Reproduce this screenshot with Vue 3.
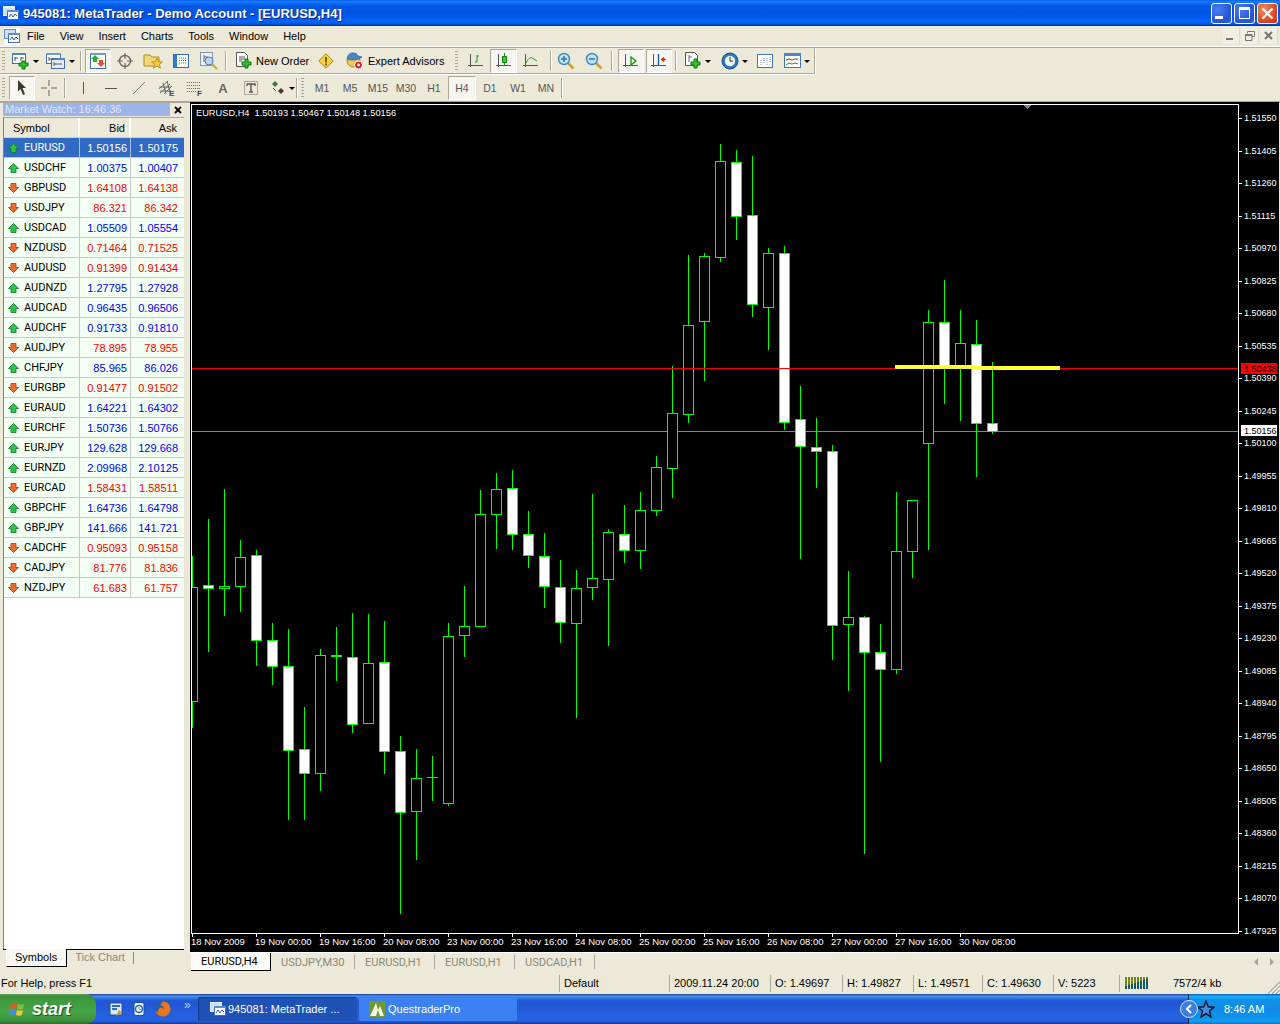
<script setup>
// [high, body top, body bottom, low, filled]
const raw = [
  [556, 587, 702, 728, 0], [519, 585, 589, 652, 1], [489, 586, 589, 616, 0], [540, 557, 587, 612, 0],
  [550, 555, 641, 666, 1], [623, 640, 667, 685, 1], [629, 666, 751, 820, 1], [707, 749, 774, 820, 1],
  [649, 655, 774, 791, 0], [627, 655, 657, 681, 1], [613, 657, 725, 733, 1], [614, 663, 724, 724, 0],
  [621, 662, 752, 774, 1], [736, 751, 813, 914, 1], [749, 778, 812, 860, 0], [756, 777, 778, 801, 0],
  [623, 636, 804, 806, 0], [586, 626, 636, 657, 0], [490, 514, 627, 627, 0], [473, 489, 515, 549, 0],
  [470, 488, 535, 550, 1], [511, 534, 556, 568, 1], [533, 556, 587, 608, 1], [560, 587, 623, 643, 1],
  [570, 588, 624, 718, 0], [494, 578, 588, 600, 0], [529, 532, 580, 646, 0], [505, 534, 551, 563, 1],
  [492, 510, 551, 569, 0], [456, 467, 511, 516, 0], [366, 413, 469, 498, 0], [255, 325, 415, 423, 0],
  [253, 256, 322, 381, 0], [144, 161, 258, 262, 0], [150, 162, 217, 240, 1], [156, 215, 305, 317, 1],
  [248, 253, 308, 350, 0], [246, 253, 423, 430, 1], [386, 419, 447, 559, 1], [418, 447, 452, 488, 1],
  [445, 451, 626, 660, 1], [571, 617, 625, 691, 0], [616, 617, 653, 854, 1], [624, 652, 670, 762, 1],
  [492, 551, 670, 674, 0], [500, 500, 552, 578, 0], [310, 322, 444, 550, 0], [280, 322, 368, 404, 1],
  [310, 343, 368, 421, 0], [320, 344, 424, 477, 1], [362, 423, 432, 434, 1],
]
const candles = raw.map((c, i) => ({ x: 192 + i * 16, high: c[0], top: c[1], bottom: c[2], low: c[3], filled: c[4] }))

const prices = ['1.51550', '1.51405', '1.51260', '1.51115', '1.50970', '1.50825', '1.50680', '1.50535', '1.50390', '1.50245',
  '1.50100', '1.49955', '1.49810', '1.49665', '1.49520', '1.49375', '1.49230', '1.49085', '1.48940', '1.48795',
  '1.48650', '1.48505', '1.48360', '1.48215', '1.48070', '1.47925'].map((p, i) => ({ p, y: Math.round(118 + i * 32.5) }))

const times = ['18 Nov 2009', '19 Nov 00:00', '19 Nov 16:00', '20 Nov 08:00', '23 Nov 00:00', '23 Nov 16:00', '24 Nov 08:00',
  '25 Nov 00:00', '25 Nov 16:00', '26 Nov 08:00', '27 Nov 00:00', '27 Nov 16:00', '30 Nov 08:00']

const chartHeader = 'EURUSD,H4\u00a0\u00a01.50193 1.50467 1.50148 1.50156'

const quotes = [
  ['EURUSD', '1.50156', '1.50175', 1], ['USDCHF', '1.00375', '1.00407', 1], ['GBPUSD', '1.64108', '1.64138', 0],
  ['USDJPY', '86.321', '86.342', 0], ['USDCAD', '1.05509', '1.05554', 1], ['NZDUSD', '0.71464', '0.71525', 0],
  ['AUDUSD', '0.91399', '0.91434', 0], ['AUDNZD', '1.27795', '1.27928', 1], ['AUDCAD', '0.96435', '0.96506', 1],
  ['AUDCHF', '0.91733', '0.91810', 1], ['AUDJPY', '78.895', '78.955', 0], ['CHFJPY', '85.965', '86.026', 1],
  ['EURGBP', '0.91477', '0.91502', 0], ['EURAUD', '1.64221', '1.64302', 1], ['EURCHF', '1.50736', '1.50766', 1],
  ['EURJPY', '129.628', '129.668', 1], ['EURNZD', '2.09968', '2.10125', 1], ['EURCAD', '1.58431', '1.58511', 0],
  ['GBPCHF', '1.64736', '1.64798', 1], ['GBPJPY', '141.666', '141.721', 1], ['CADCHF', '0.95093', '0.95158', 0],
  ['CADJPY', '81.776', '81.836', 0], ['NZDJPY', '61.683', '61.757', 0],
]

const menus = ['File', 'View', 'Insert', 'Charts', 'Tools', 'Window', 'Help']
const periods = ['M1', 'M5', 'M15', 'M30', 'H1', 'H4', 'D1', 'W1', 'MN']
const chartTabs = ['USDJPY,M30', 'EURUSD,H1', 'EURUSD,H1', 'USDCAD,H1']
const status = [
  { t: '2009.11.24 20:00', w: 101 }, { t: 'O: 1.49697', w: 72 }, { t: 'H: 1.49827', w: 71 },
  { t: 'L: 1.49571', w: 69 }, { t: 'C: 1.49630', w: 71 }, { t: 'V: 5223', w: 66 },
]
// signal meter: teal part grows from left to right, olive sits on top
const meter = [3, 4, 5, 6, 7, 8, 9, 10].map(h => `linear-gradient(0deg, #14566e ${h}px, #6f8a12 ${h}px)`)
</script>

<template>
  <div class="app">
    <div class="titlebar">
      <svg class="appicon" width="16" height="16" viewBox="0 0 16 16">
        <rect x="0.5" y="1.5" width="11" height="9" fill="#cfe0f5" stroke="#dfefff" />
        <rect x="0" y="1" width="12" height="2" fill="#e8f2ff" />
        <rect x="4.5" y="5.5" width="11" height="9" fill="#fff" stroke="#3d6fb0" />
        <rect x="4" y="5" width="12" height="2" fill="#5b8fd0" />
        <path d="M6 12l2-3 2 3 2-3 2 2" fill="none" stroke="#2f5f9f" />
      </svg>
      <span class="title-text">945081: MetaTrader - Demo Account - [EURUSD,H4]</span>
      <div class="winbtns">
        <div class="winbtn"><i class="min-glyph"></i></div>
        <div class="winbtn"><i class="max-glyph"></i></div>
        <div class="winbtn close">
          <svg width="13" height="13" viewBox="0 0 13 13"><path d="M1.5 1.5l10 10M11.5 1.5l-10 10" stroke="#fff" stroke-width="2.2" /></svg>
        </div>
      </div>
    </div>

    <div class="menubar">
      <div class="menu-icon">
        <svg width="16" height="16" viewBox="0 0 16 16">
          <rect x="0.5" y="1.5" width="11" height="9" fill="#cfe0f5" stroke="#5b8fd0" />
          <rect x="4.5" y="5.5" width="11" height="9" fill="#fff" stroke="#3d6fb0" />
          <rect x="4" y="5" width="12" height="2" fill="#5b8fd0" />
          <path d="M6 12l2-3 2 3 2-3 2 2" fill="none" stroke="#2f5f9f" />
        </svg>
      </div>
      <span v-for="m in menus" :key="m" class="menu-item">{{ m }}</span>
      <div class="mdi">
        <div class="mdi-btn"><svg width="12" height="12" viewBox="0 0 12 12"><rect x="1" y="8" width="7" height="2" fill="#777" /></svg></div>
        <div class="mdi-btn"><svg width="12" height="12" viewBox="0 0 12 12"><path d="M3.5 3.5V1.5h7v5H8M1.5 4.5h6.5v6H1.5z" fill="none" stroke="#777" /><rect x="1" y="4" width="7" height="2" fill="#777" /></svg></div>
        <div class="mdi-btn"><svg width="12" height="12" viewBox="0 0 12 12"><path d="M2 2l7 7M9 2l-7 7" stroke="#777" stroke-width="2.2" /></svg></div>
      </div>
    </div>

    <div class="bar bar-one">
      <div class="band band-a">
        <i class="grip"></i>
        <div class="tool newchart">
          <svg width="18" height="18" viewBox="0 0 18 18">
            <rect x="0.5" y="1.5" width="13" height="10" fill="#fff" stroke="#3d6fb0" />
            <rect x="0" y="1" width="14" height="2" fill="#4f86c8" />
            <path d="M3 9V5M3 6h3M9 9V5M9 6h3" stroke="#555" fill="none" />
            <path d="M8 8h3v-2h3v2h3v3h-3v3h-3v-3H8z" transform="translate(-1 3)" fill="#2ec22e" stroke="#0b7a0b" />
          </svg>
          <i class="dd"></i>
        </div>
        <div class="tool profiles">
          <svg width="20" height="18" viewBox="0 0 20 18">
            <rect x="0.5" y="1.5" width="14" height="10" fill="#fff" stroke="#3d6fb0" />
            <rect x="0" y="1" width="15" height="2" fill="#6d9ad4" />
            <rect x="5.5" y="6.5" width="13" height="10" fill="#e4eefa" stroke="#3d6fb0" />
            <rect x="5" y="6" width="14" height="2" fill="#4f86c8" />
            <path d="M3 9V5M3 7h6M8 14v-4M8 12h8" stroke="#555" fill="none" />
          </svg>
          <i class="dd"></i>
        </div>
        <i class="sep s-a"></i>
        <div class="tool pressed active-btn">
          <svg width="16" height="18" viewBox="0 0 16 18">
            <rect x="0.5" y="1.5" width="15" height="15" fill="#fff" stroke="#3d6fb0" />
            <rect x="0" y="1" width="16" height="2" fill="#6d9ad4" />
            <path d="M5 3l4 4H7v3H3V7H1z" fill="#27b327" />
            <path d="M11 15l-4-4h2V8h4v3h2z" fill="#e5532a" />
          </svg>
        </div>
        <div class="tool">
          <svg width="18" height="18" viewBox="0 0 18 18"><circle cx="9" cy="9" r="5.5" fill="none" stroke="#666" stroke-width="1.4" /><path d="M9 1v6M9 11v6M1 9h6M11 9h6" stroke="#666" stroke-width="1.2" /></svg>
        </div>
        <div class="tool">
          <svg width="20" height="18" viewBox="0 0 20 18">
            <path d="M1 3h6l2 2h7v9H1z" fill="#f3d774" stroke="#a98a2d" />
            <path d="M14 6l1.6 3.6 3.9.3-3 2.5 1 3.8-3.5-2.1-3.5 2.1 1-3.8-3-2.5 3.9-.3z" fill="#f5c93a" stroke="#a0801e" stroke-width=".7" />
          </svg>
        </div>
        <div class="tool">
          <svg width="16" height="16" viewBox="0 0 16 16">
            <rect x="0.5" y="1.5" width="15" height="13" fill="#fff" stroke="#2f6db5" />
            <rect x="1" y="2" width="3" height="12" fill="#2f7fd0" />
            <path d="M6 5h7M6 7.5h7M6 10h7" stroke="#c23b3b" stroke-dasharray="1 1" />
          </svg>
        </div>
        <div class="tool">
          <svg width="18" height="18" viewBox="0 0 18 18">
            <rect x="0.5" y="0.5" width="12" height="13" fill="#eef3f8" stroke="#8295ad" />
            <path d="M4 10V3M4 5h4" stroke="#666" />
            <circle cx="9" cy="9" r="4" fill="#bcd6f2" stroke="#4d7cab" />
            <path d="M12 12l5 5" stroke="#c8a63a" stroke-width="2" />
          </svg>
        </div>
        <i class="sep s-b"></i>
        <div class="tool labelled new-order">
          <svg width="17" height="20" viewBox="0 0 17 20">
            <path d="M.5 1.5h8l3 3v11H.5z" fill="#fff" stroke="#555" />
            <path d="M3 6h6M3 8h6M3 10h3" stroke="#555" />
            <path d="M9 8h3v3h3v3h-3v3H9v-3H6v-3h3z" fill="#2ec22e" stroke="#0b7a0b" />
          </svg>
          <span>New Order</span>
        </div>
        <div class="tool">
          <svg width="16" height="16" viewBox="0 0 16 16">
            <path d="M8 .8L15.2 8 8 15.2.8 8z" fill="#f7d13d" stroke="#a9861e" stroke-linejoin="round" />
            <rect x="7" y="4" width="2" height="5.5" fill="#7a5d10" />
            <rect x="7" y="10.5" width="2" height="2" fill="#7a5d10" />
          </svg>
        </div>
        <div class="tool labelled ea">
          <svg width="17" height="18" viewBox="0 0 17 18">
            <ellipse cx="7.5" cy="9" rx="6.5" ry="6" fill="#f2c94c" stroke="#a9861e" />
            <path d="M1 7c1-5 3-6 6-6s4 1 5 3l4 1c-3 3-10 4-15 2z" fill="#4d86c6" stroke="#2a5c96" stroke-width=".7" />
            <circle cx="12.5" cy="13" r="4" fill="#d42020" stroke="#fff" />
            <circle cx="12.5" cy="13" r="1.4" fill="#fff" />
          </svg>
          <span>Expert Advisors</span>
        </div>
      </div>
      <div class="band band-b">
        <i class="grip"></i>
        <div class="tool bars-btn">
          <svg width="16" height="16" viewBox="0 0 16 16">
            <path d="M2.5 1v13M0 12.5h15" stroke="#555" fill="none" />
            <path d="M9 2v7M9 3h2M9 9H7" stroke="#1c9a1c" fill="none" />
          </svg>
        </div>
        <div class="tool pressed candle-btn">
          <svg width="16" height="16" viewBox="0 0 16 16">
            <path d="M2.5 1v13M0 12.5h15" stroke="#555" fill="none" />
            <path d="M8.5 0v12" stroke="#1c9a1c" />
            <rect x="6.5" y="3.5" width="4" height="6" fill="#2fd12f" stroke="#0d8a0d" />
          </svg>
        </div>
        <div class="tool">
          <svg width="16" height="16" viewBox="0 0 16 16">
            <path d="M2.5 1v13M0 12.5h15" stroke="#555" fill="none" />
            <path d="M3 10c2-4 4-6 6-5s3 2 5 3" stroke="#1c9a1c" fill="none" />
          </svg>
        </div>
        <i class="sep s-c"></i>
        <div class="tool">
          <svg width="18" height="18" viewBox="0 0 18 18">
            <path d="M10.5 10.5l6 6" stroke="#caa43a" stroke-width="2.6" />
            <circle cx="7" cy="7" r="5.5" fill="#bfe0f5" stroke="#3f88bd" stroke-width="1.4" />
            <path d="M7 4v6M4 7h6" stroke="#2b77b0" stroke-width="1.6" />
          </svg>
        </div>
        <div class="tool">
          <svg width="18" height="18" viewBox="0 0 18 18">
            <path d="M10.5 10.5l6 6" stroke="#caa43a" stroke-width="2.6" />
            <circle cx="7" cy="7" r="5.5" fill="#bfe0f5" stroke="#3f88bd" stroke-width="1.4" />
            <path d="M4 7h6" stroke="#2b77b0" stroke-width="1.6" />
          </svg>
        </div>
        <i class="sep s-d"></i>
        <div class="tool pressed shift-a">
          <svg width="16" height="16" viewBox="0 0 16 16">
            <path d="M2.5 1v13M0 12.5h15" stroke="#555" fill="none" />
            <path d="M8 4l5 4-5 4z" fill="none" stroke="#1c9a1c" stroke-width="1.4" />
          </svg>
        </div>
        <div class="tool pressed shift-b">
          <svg width="16" height="16" viewBox="0 0 16 16">
            <path d="M2.5 1v13M0 12.5h15" stroke="#555" fill="none" />
            <path d="M7.5 1v12" stroke="#1f5f9f" stroke-width="1.4" />
            <path d="M15 6.5h-3M13 4.5l-3 2 3 2z" fill="#c8391c" stroke="#c8391c" />
          </svg>
        </div>
        <i class="sep s-e"></i>
        <div class="tool newdoc">
          <svg width="17" height="20" viewBox="0 0 17 20">
            <path d="M.5 1.5h9l3 3v10H.5z" fill="#fff" stroke="#555" />
            <path d="M4 4v7M4 6h3" stroke="#666" />
            <path d="M9 8h3v3h3v3h-3v3H9v-3H6v-3h3z" fill="#2ec22e" stroke="#0b7a0b" />
          </svg>
          <i class="dd"></i>
        </div>
        <div class="tool clock">
          <svg width="18" height="18" viewBox="0 0 18 18">
            <circle cx="9" cy="9" r="8" fill="#2a78c8" stroke="#17508f" />
            <circle cx="9" cy="9" r="5.2" fill="#eef4fa" />
            <path d="M9 5v4h3" stroke="#333" fill="none" />
          </svg>
          <i class="dd"></i>
        </div>
        <div class="tool tile">
          <svg width="16" height="16" viewBox="0 0 16 16">
            <rect x="0.5" y="1.5" width="15" height="13" fill="#fff" stroke="#3d78b8" />
            <path d="M4 12V7M7 10V5M7 7h2M10 12V4M13 9V4" stroke="#7b93ad" stroke-dasharray="1 1" />
          </svg>
        </div>
        <div class="tool wintpl">
          <svg width="17" height="16" viewBox="0 0 17 16">
            <rect x="0.5" y="0.5" width="16" height="14" fill="#fff" stroke="#3d78b8" />
            <rect x="0" y="0" width="17" height="3" fill="#4f86c8" />
            <path d="M2 7l3-1 3 1 3-1 3 0" stroke="#b33a1e" fill="none" />
            <path d="M2 12l3-2 3 1 3-1 3 1" stroke="#1c9a1c" fill="none" />
          </svg>
          <i class="dd"></i>
        </div>
      </div>
    </div>

    <div class="bar bar-two">
      <div class="band band-c">
        <i class="grip"></i>
        <div class="tool pressed cursor-btn">
          <svg width="14" height="18" viewBox="0 0 14 18"><path d="M3 1l8 8H7.5l2.5 6-2 1-2.5-6L3 12.5z" fill="#3a3a3a" /></svg>
        </div>
        <div class="tool cross-btn">
          <svg width="18" height="18" viewBox="0 0 18 18"><path d="M9 1v6M9 11v6M1 9h6M11 9h6" stroke="#666" /></svg>
        </div>
        <i class="sep s-f"></i>
        <div class="tool line-first"><svg width="14" height="14" viewBox="0 0 14 14"><path d="M7.5 1v12" stroke="#555" /></svg></div>
        <div class="tool"><svg width="14" height="14" viewBox="0 0 14 14"><path d="M1 7.5h12" stroke="#555" /></svg></div>
        <div class="tool"><svg width="14" height="14" viewBox="0 0 14 14"><path d="M1 13L13 1" stroke="#777" /></svg></div>
        <div class="tool">
          <svg width="18" height="18" viewBox="0 0 18 18">
            <path d="M1 10l9-8M2 14l10-9M6 15l8-8M5 4l3 11M9 2l3 11M1 8h12M2 12h11" stroke="#555" stroke-width=".8" />
            <text x="11" y="17" class="mini">E</text>
          </svg>
        </div>
        <div class="tool">
          <svg width="18" height="18" viewBox="0 0 18 18">
            <path d="M1 3.5h13M1 6.5h13M1 9.5h13M1 12.5h10" stroke="#666" stroke-dasharray="1 1" />
            <text x="11" y="17" class="mini">F</text>
          </svg>
        </div>
        <div class="tool"><span class="a-glyph">A</span></div>
        <div class="tool">
          <svg width="16" height="16" viewBox="0 0 16 16">
            <rect x="1.5" y="1.5" width="13" height="13" fill="none" stroke="#666" stroke-dasharray="1 1" />
            <path d="M4 4h8v2M4 4v2M8 4v8M6 12h4" stroke="#555" stroke-width="1.4" fill="none" />
          </svg>
        </div>
        <div class="tool arrows-btn">
          <svg width="16" height="16" viewBox="0 0 16 16">
            <path d="M5 1l3 3-3 3-3-3z" fill="#3a7a3a" />
            <path d="M11 8l3 3-3 3-3-3z" fill="#3a3a3a" />
            <path d="M3 8l3 3" stroke="#555" />
          </svg>
          <i class="dd"></i>
        </div>
        <i class="sep s-g"></i>
        <i class="grip grip-p"></i>
        <div class="periods">
          <span v-for="p in periods" :key="p" class="period" :class="{ pressed: p === 'H4' }">{{ p }}</span>
        </div>
        <i class="sep s-h"></i>
      </div>
    </div>

    <div class="main">
      <div class="side">
        <div class="side-head">
          <span class="mw-title">Market Watch: 16:46:36</span>
          <svg class="mw-x" width="8" height="8" viewBox="0 0 8 8"><path d="M1 1l6 6M7 1L1 7" stroke="#000" stroke-width="1.8" /></svg>
        </div>
        <div class="mw-box">
          <div class="mw-row mw-header">
            <span class="c-sym">Symbol</span>
            <span class="c-num">Bid</span>
            <span class="c-num">Ask</span>
          </div>
          <div
            v-for="(q, i) in quotes"
            :key="q[0]"
            class="mw-row"
            :class="{ selected: i === 0, up: q[3], down: !q[3] }"
          >
            <span class="c-sym">
              <svg width="11" height="10" viewBox="0 0 11 10">
                <path v-if="q[3]" d="M5.5 .5l5 5H8v4H3v-4H.5z" fill="#2ec24a" stroke="#0f7a2a" stroke-width=".8" />
                <path v-else d="M5.5 9.5l5-5H8v-4H3v4H.5z" fill="#ee6a2c" stroke="#a53a14" stroke-width=".8" />
              </svg>
              <span class="sym-name">{{ q[0] }}</span>
            </span>
            <span class="c-num">{{ q[1] }}</span>
            <span class="c-num">{{ q[2] }}</span>
          </div>
        </div>
        <div class="side-tabs">
          <span class="side-tab on">Symbols</span>
          <span class="side-tab">Tick Chart</span>
          <i class="tab-sep"></i>
        </div>
      </div>

      <div class="work">
        <svg class="chart" width="1089" height="850" viewBox="190 102 1089 850">
          <defs>
            <clipPath id="plot"><rect x="192" y="105" width="1046" height="828" /></clipPath>
          </defs>
          <rect x="190" y="102" width="1089" height="850" fill="#000" />
          <rect x="192" y="431" width="1046" height="1" fill="#778899" />
          <g clip-path="url(#plot)" shape-rendering="crispEdges">
            <g v-for="c in candles" :key="c.x">
              <rect :x="c.x" :y="c.high" width="1" :height="c.low - c.high" fill="#00ff00" />
              <rect :x="c.x - 5" :y="c.top" width="11" :height="c.bottom - c.top" fill="#00ff00" />
              <rect
                v-if="c.bottom - c.top > 2"
                :x="c.x - 4"
                :y="c.top + 1"
                width="9"
                :height="c.bottom - c.top - 2"
                :fill="c.filled ? '#fff' : '#000'"
              />
            </g>
          </g>
          <g shape-rendering="crispEdges">
            <rect x="192" y="368" width="1046" height="1" fill="#ff0000" />
            <rect x="895" y="365" width="82" height="4" fill="#ffff33" />
            <rect x="977" y="366" width="83" height="4" fill="#ffff33" />
            <path d="M1023 105h9l-4.500 4z" fill="#778899" />
            <rect x="191" y="104" width="1048" height="1" fill="#fff" />
            <rect x="191" y="933" width="1048" height="1" fill="#fff" />
            <rect x="191" y="104" width="1" height="830" fill="#fff" />
            <rect x="1238" y="104" width="1" height="830" fill="#fff" />
            <rect v-for="p in prices" :key="p.p" x="1239" :y="p.y" width="3" height="1" fill="#fff" />
            <rect v-for="(t, i) in times" :key="i" :x="192 + i * 64" y="933" width="1" height="4" fill="#fff" />
          </g>
          <text x="196" y="116" class="t head">{{ chartHeader }}</text>
          <text v-for="p in prices" :key="p.p" x="1244" :y="p.y + 3" class="t">{{ p.p }}</text>
          <text v-for="(t, i) in times" :key="t" :x="191 + i * 64" y="945" class="t wide">{{ t }}</text>
          <rect x="1241" y="363" width="36" height="11" fill="#ff0000" shape-rendering="crispEdges" />
          <text x="1244" y="372" class="t dark">1.50438</text>
          <rect x="1241" y="425" width="36" height="11" fill="#fff" shape-rendering="crispEdges" />
          <text x="1244" y="434" class="t dark">1.50156</text>
        </svg>
        <div class="chart-tabs">
          <span class="chart-tab on">EURUSD,H4</span>
          <span v-for="(t, i) in chartTabs" :key="i" class="chart-tab">{{ t }}</span>
          <div class="tab-arrows">
            <i class="tri-l"></i>
            <i class="tri-r"></i>
          </div>
        </div>
      </div>
    </div>

    <div class="statusbar">
      <span class="st-help">For Help, press F1</span>
      <span class="st-cell st-default">Default</span>
      <span v-for="s in status" :key="s.t" class="st-cell st-item" :style="{ width: s.w + 'px' }">{{ s.t }}</span>
      <span class="st-cell st-meter">
        <span class="meter">
          <i v-for="(bg, n) in meter" :key="n" :style="{ background: bg }"></i>
        </span>
      </span>
      <span class="st-mem">7572/4 kb</span>
      <svg class="st-grip" width="14" height="14" viewBox="0 0 14 14">
        <path d="M14 2L2 14M14 6L6 14M14 10l-4 4" stroke="#aca899" stroke-width="1.4" />
        <path d="M14 3.500L3.500 14M14 7.500L7.500 14M14 11.500L11.500 14" stroke="#fff" />
      </svg>
    </div>

    <div class="taskbar">
      <div class="start">
        <svg width="18" height="18" viewBox="0 0 18 18">
          <path d="M2 4c2-1 4-1 6 0l-1 5c-2-1-4-1-6 0z" fill="#e8532a" />
          <path d="M9 4c2 1 4 1 6 0l-1 5c-2 1-4 1-6 0z" fill="#7ac143" />
          <path d="M1 10c2-1 4-1 6 0l-1 5c-2-1-4-1-6 0z" fill="#3f8fe0" />
          <path d="M8 10c2 1 4 1 6 0l-1 5c-2 1-4 1-6 0z" fill="#f6c33c" />
        </svg>
        <span>start</span>
      </div>
      <div class="quick">
        <svg width="16" height="16" viewBox="0 0 16 16">
          <rect x="2" y="2" width="12" height="12" rx="1" fill="#dfeaf8" stroke="#1b4f9c" />
          <path d="M4 5h8M4 8h5" stroke="#2f6db5" stroke-width="2" />
          <path d="M8 15l3-6 3 3z" fill="#c93" />
        </svg>
        <svg width="16" height="16" viewBox="0 0 16 16">
          <rect x="3" y="1.500" width="10" height="13" rx="2" fill="#eef4fb" stroke="#1a4f98" />
          <circle cx="8" cy="8" r="3.500" fill="none" stroke="#1f6bc2" stroke-width="1.6" />
          <path d="M8 6v2.500h2.500" stroke="#d28a20" fill="none" />
        </svg>
        <svg width="18" height="18" viewBox="0 0 18 18">
          <circle cx="9" cy="9" r="7.500" fill="#2c5ea8" />
          <path d="M9 1.500a7.500 7.500 0 0 1 7 10c-1 3-4 5-7 5-4 0-7-3-7.500-6 1 1 2 2 3 2-1-2 0-4 2-5 2 0 3 1 3 2 1-2-1-4-3-4 1-2 2-4 2.500-4z" fill="#e8761f" />
        </svg>
        <span class="more">»</span>
      </div>
      <div class="task current">
        <svg width="16" height="16" viewBox="0 0 16 16">
          <rect x="0.500" y="1.500" width="11" height="9" fill="#cfe0f5" stroke="#dfefff" />
          <rect x="4.500" y="5.500" width="11" height="9" fill="#fff" stroke="#3d6fb0" />
          <rect x="4" y="5" width="12" height="2" fill="#5b8fd0" />
          <path d="M6 12l2-3 2 3 2-3 2 2" fill="none" stroke="#2f5f9f" />
        </svg>
        <span>945081: MetaTrader ...</span>
      </div>
      <div class="task">
        <svg width="16" height="16" viewBox="0 0 16 16">
          <rect width="16" height="16" fill="#6f9a2c" />
          <path d="M1 15L7 2l2 7 2-4 4 10z" fill="#f2f5ea" />
          <path d="M7 15l2-6 2 6z" fill="#6f9a2c" />
        </svg>
        <span>QuestraderPro</span>
      </div>
      <div class="tray">
        <div class="chev">
          <svg width="8" height="10" viewBox="0 0 8 10"><path d="M6 1L2 5l4 4" fill="none" stroke="#fff" stroke-width="2" /></svg>
        </div>
        <svg class="star" width="18" height="18" viewBox="0 0 18 18">
          <path d="M9 1l2.200 5.800L17 7.200l-4.500 3.800L14 17l-5-3.400L4 17l1.500-6L1 7.200l5.800-.4z" fill="#3f8fe0" stroke="#06122e" stroke-width="1.400" />
        </svg>
        <span class="clock-text">8:46 AM</span>
      </div>
    </div>
  </div>
</template>

<style scoped>
.app {
  width: 1280px;
  height: 1024px;
  display: flex;
  flex-direction: column;
  overflow: hidden;
  background: #ece9d8;
  font-family: "Liberation Sans", Arial, sans-serif;
  font-size: 11px;
  color: #000;
}

/* title bar */
.titlebar {
  height: 26px;
  flex: none;
  display: flex;
  align-items: center;
  padding-left: 3px;
  background: linear-gradient(180deg, #0058ee 0%, #1f80f8 6%, #0a6cf4 12%, #0058e6 24%, #0054e3 50%, #0058ec 66%, #0466f8 80%, #005ce8 90%, #0044b8 96%, #003092 100%);
}
.appicon { margin-right: 4px; }
.title-text {
  color: #fff;
  font-weight: bold;
  font-size: 13px;
  text-shadow: 1px 1px 0 #0f1f7f;
  white-space: nowrap;
}
.winbtns {
  margin-left: auto;
  margin-right: 2px;
  display: flex;
  gap: 2px;
}
.winbtn {
  width: 21px;
  height: 21px;
  box-sizing: border-box;
  border: 1px solid #fff;
  border-radius: 3px;
  background: radial-gradient(circle at 30% 30%, #4c7cf0, #2454d8 70%, #3563e0);
  display: flex;
  align-items: center;
  justify-content: center;
  position: relative;
}
.winbtn.close { background: radial-gradient(circle at 30% 30%, #f08a66, #d8431c 70%, #c53a16); }
.min-glyph { width: 8px; height: 3px; background: #fff; margin: 9px 5px 0 0; }
.max-glyph { width: 11px; border: 1px solid #fff; border-top-width: 3px; box-sizing: border-box; height: 12px; }

/* menu */
.menubar {
  height: 20px;
  flex: none;
  display: flex;
  align-items: center;
  border-bottom: 1px solid #fff;
  box-shadow: 0 1px 0 #aca899;
}
.menu-icon {
  width: 16px;
  height: 17px;
  margin: 0 7px 0 4px;
  background: #fff;
  display: flex;
  align-items: center;
}
.menu-item { margin-right: 15px; }
.mdi {
  margin-left: auto;
  margin-right: 2px;
  display: flex;
  gap: 2px;
}
.mdi-btn {
  width: 16px;
  height: 16px;
  background: #f1efe4;
  border-right: 1px solid #dcd9c8;
  display: flex;
  align-items: center;
  justify-content: center;
}

/* toolbars */
.bar {
  flex: none;
  display: flex;
}
.bar-one { height: 27px; margin-top: 1px; }
.bar-two { height: 26px; box-shadow: 0 2px 0 #aca899, 0 1px 0 #8f8c7c; }
.band {
  display: flex;
  align-items: center;
  box-sizing: border-box;
  height: 100%;
  border-bottom: 1px solid #fff;
  box-shadow: inset 0 -1px 0 #aca899;
}
.band-a { width: 450px; }
.band-b { width: 366px; border-right: 1px solid #fff; box-shadow: inset -1px -1px 0 #aca899; }
.band-c { width: 100%; box-shadow: none; border-bottom: 0; }

.grip {
  width: 3px;
  height: 20px;
  margin-left: 2px;
  background: repeating-linear-gradient(180deg, #aca899 0 1px, transparent 1px 3px);
  flex: none;
}
.sep {
  width: 1px;
  height: 20px;
  background: #aca899;
  border-right: 1px solid #fff;
  flex: none;
}
.tool {
  width: 28px;
  height: 24px;
  box-sizing: border-box;
  flex: none;
  display: flex;
  align-items: center;
  justify-content: center;
}
.pressed {
  background: #f6f5f0;
  border: 1px solid;
  border-color: #aca899 #fff #fff #aca899;
}
.dd {
  width: 0;
  height: 0;
  border: 3px solid transparent;
  border-top: 3px solid #000;
  border-bottom: 0;
  margin-left: 3px;
  flex: none;
}
.newchart { margin-left: 5px; width: 30px; }
.profiles { margin-left: 5px; width: 30px; }
.s-a { margin-left: 5px; }
.active-btn { width: 26px; margin-left: 3px; }
.s-b { margin-left: 2px; }
.labelled {
  justify-content: flex-start;
  gap: 3px;
  width: auto;
  white-space: nowrap;
}
.new-order { margin-left: 9px; width: 76px; }
.ea { width: 106px; margin-left: 6px; gap: 5px; }
.band-b > .grip { margin-left: 5px; margin-right: 4px; }
.candle-btn { width: 27px; margin-left: 0; }
.s-c { margin-left: 5px; }
.s-d { margin-left: 3px; }
.shift-a { width: 26px; margin-left: 5px; }
.shift-b { width: 26px; margin-left: 2px; }
.s-e { margin-left: 3px; }
.newdoc { margin-left: 5px; width: 31px; }
.clock { margin-left: 6px; width: 30px; }
.tile { margin-left: 2px; }
.wintpl { margin-left: 3px; width: 30px; }

.cursor-btn { width: 26px; margin-left: 4px; }
.s-f { margin-left: 1px; }
.line-first { margin-left: 3px; }
.arrows-btn { width: 31px; padding-left: 4px; }
.a-glyph { font-size: 13px; font-weight: bold; color: #666; }
.mini { font: bold 8px "Liberation Sans", sans-serif; fill: #444; }
.grip-p { margin-left: 3px; }
.periods { display: flex; margin-left: 4px; }
.period {
  width: 28px;
  height: 24px;
  box-sizing: border-box;
  display: flex;
  align-items: center;
  justify-content: center;
  color: #555;
  font-size: 10.500px;
}
.s-h { margin-left: 1px; }

/* main */
.main {
  flex: none;
  height: 870px;
  display: flex;
  margin-top: 1px;
}
.side { width: 190px; flex: none; display: flex; flex-direction: column; }
.side-head {
  height: 13px;
  margin-top: 1px;
  padding-left: 3px;
  display: flex;
  align-items: center;
}
.mw-title {
  width: 167px;
  height: 13px;
  line-height: 13px;
  padding-left: 2px;
  box-sizing: border-box;
  background: #9db4e8;
  color: #dfe7f7;
  white-space: nowrap;
}
.mw-x { margin-left: 4px; }
.mw-box {
  flex: 1;
  margin: 1px 6px 0 3px;
  background: #fff;
  border-left: 1px solid #808080;
  border-top: 1px solid #aca899;
  overflow: hidden;
}
.mw-row {
  height: 20px;
  box-sizing: border-box;
  display: flex;
  background: #f2fff2;
  border-bottom: 1px solid #c8c8c8;
}
.c-sym {
  width: 76px;
  flex: none;
  display: flex;
  align-items: center;
  gap: 5px;
  padding-left: 4px;
  box-sizing: border-box;
  border-right: 1px solid #c8c8c8;
}
.sym-name, .chart-tab { font-family: Roboto, "Liberation Sans", sans-serif; }
.c-num {
  width: 51px;
  flex: none;
  box-sizing: border-box;
  display: flex;
  align-items: center;
  justify-content: flex-end;
  padding-right: 3px;
  border-right: 1px solid #c8c8c8;
}
.mw-row .c-num:last-child { width: 52px; border-right: 0; padding-right: 5px; }
.up .c-num { color: #0000ff; }
.down .c-num { color: #ff0000; }
.mw-row.selected { background: #316ac5; color: #fff; }
.mw-row.selected .c-sym, .mw-row.selected .c-num { color: #fff; border-right-color: #a9c1e8; }
.mw-header {
  background: #ece9d8;
  border-bottom: 1px solid #d6d3c2;
}
.mw-header .c-sym {
  padding-left: 9px;
  border-right: 2px solid #fff;
}
.mw-header .c-num { border-right: 2px solid #fff; padding-right: 4px; }
.mw-header .c-num:last-child { padding-right: 6px; }

.side-tabs {
  height: 22px;
  margin-left: 3px;
  margin-right: 6px;
  display: flex;
  align-items: flex-start;
  border-top: 1px solid #000;
}
.side-tab {
  height: 17px;
  line-height: 17px;
  padding: 0 7px 0 8px;
  color: #8a8878;
  margin-top: -1px;
  white-space: nowrap;
}
.side-tab.on {
  margin-left: 3px;
  background: #f8f7f2;
  color: #000;
  border: 1px solid #000;
  border-top: 0;
  border-left-color: #fff;
  padding: 0 9px 0 8px;
}
.tab-sep { width: 1px; height: 12px; background: #8a8878; margin: 2px 0 0 1px; }

.work { flex: 1; display: flex; flex-direction: column; min-width: 0; }
.chart { display: block; flex: none; }
.t {
  font-family: "Liberation Sans", Arial, sans-serif;
  font-size: 9px;
  fill: #fff;
}
.t.wide { font-size: 9.500px; }
.t.head { font-size: 9.250px; }
.t.dark { fill: #000; }
.chart-tabs {
  height: 20px;
  display: flex;
  border-top: 1px solid #fff;
  box-sizing: border-box;
  padding-left: 1px;
  position: relative;
}
.chart-tab {
  width: 80px;
  box-sizing: border-box;
  display: flex;
  align-items: center;
  padding-left: 10px;
  color: #8a8878;
  border-right: 1px solid #aca899;
  white-space: nowrap;
  margin-top: 2px;
  height: 14px;
}
.chart-tab.on {
  height: 18px;
  margin-top: 0;
  background: #fbfaf6;
  color: #000;
  border-right: 1px solid #000;
  border-bottom: 1px solid #000;
  width: 80px;
}
.chart-tab:nth-child(2) { width: 84px; }
.tab-arrows {
  position: absolute;
  right: 6px;
  top: 5px;
  display: flex;
  gap: 12px;
}
.tri-l, .tri-r {
  width: 0;
  height: 0;
  border: 4px solid transparent;
  border-left-width: 0;
  border-right: 4px solid #a8a698;
}
.tri-r { border-right-width: 0; border-left: 4px solid #a8a698; }

/* status */
.statusbar {
  flex: none;
  height: 22px;
  display: flex;
  align-items: center;
  position: relative;
}
.st-help { width: 559px; padding-left: 1px; box-sizing: border-box; flex: none; }
.st-cell {
  height: 17px;
  line-height: 17px;
  border-left: 1px solid #aca899;
  box-sizing: border-box;
  flex: none;
  white-space: nowrap;
}
.st-default { width: 110px; padding-left: 4px; }
.st-item { padding-left: 4px; }
.st-meter { width: 50px; padding: 2px 0 0 5px; display: flex; align-items: flex-start; }
.meter { display: flex; gap: 1px; height: 12px; }
.meter i { width: 2px; height: 12px; }
.st-mem { margin-left: 4px; }
.st-grip { position: absolute; right: 0; bottom: 0; }

/* taskbar */
.taskbar {
  flex: none;
  height: 30px;
  display: flex;
  align-items: center;
  background: linear-gradient(180deg, #1f2f86 0, #3165c4 3%, #3682e5 6%, #4490e6 10%, #3883e5 12%, #2b71e0 15%, #2663da 18%, #235bd6 20%, #2258d5 23%, #2157d6 38%, #245ddb 54%, #2562df 86%, #245fdc 89%, #2158d4 92%, #1d4ec0 95%, #1941a5 98%);
}
.start {
  width: 96px;
  height: 30px;
  flex: none;
  box-sizing: border-box;
  padding-left: 9px;
  display: flex;
  align-items: center;
  gap: 5px;
  border-radius: 0 10px 10px 0;
  background: linear-gradient(180deg, #5aa15a 0, #3e8c3e 8%, #3d9a3d 20%, #46a646 60%, #3c923c 88%, #2d6e2d 100%);
  color: #fff;
  font-size: 18px;
  font-weight: bold;
  font-style: italic;
  text-shadow: 1px 1px 1px #1d4a1d;
}
.quick {
  width: 102px;
  flex: none;
  box-sizing: border-box;
  padding-left: 12px;
  display: flex;
  align-items: center;
  gap: 7px;
}
.more { color: #b8cff5; font-size: 12px; margin: -8px 0 0 5px; }
.task {
  width: 158px;
  height: 24px;
  flex: none;
  box-sizing: border-box;
  margin-right: 2px;
  padding-left: 10px;
  border-radius: 2px;
  background: #3c81f3;
  color: #fff;
  display: flex;
  align-items: center;
  gap: 3px;
  white-space: nowrap;
}
.task.current {
  width: 159px;
  background: #1e52b7;
  box-shadow: inset 1px 1px 1px #153a8a;
  padding-left: 12px;
  gap: 2px;
}
.tray {
  margin-left: auto;
  width: 92px;
  height: 30px;
  box-sizing: border-box;
  position: relative;
  display: flex;
  align-items: center;
  background: linear-gradient(180deg, #0c59b9 0, #139ee9 6%, #18b5f2 10%, #139beb 14%, #1290e8 20%, #0d8dea 56%, #0f94ed 84%, #11a2f2 90%, #0e6ecc 100%);
  border-left: 1px solid #092e51;
}
.chev {
  position: absolute;
  left: -9px;
  top: 6px;
  width: 18px;
  height: 18px;
  border-radius: 50%;
  border: 1px solid #cfe3fa;
  box-sizing: border-box;
  background: #3b80e0;
  display: flex;
  align-items: center;
  justify-content: center;
}
.star { margin-left: 8px; }
.clock-text { color: #fff; margin-left: 9px; white-space: nowrap; }
</style>

<style>
html, body { margin: 0; background: #ece9d8; }
</style>
